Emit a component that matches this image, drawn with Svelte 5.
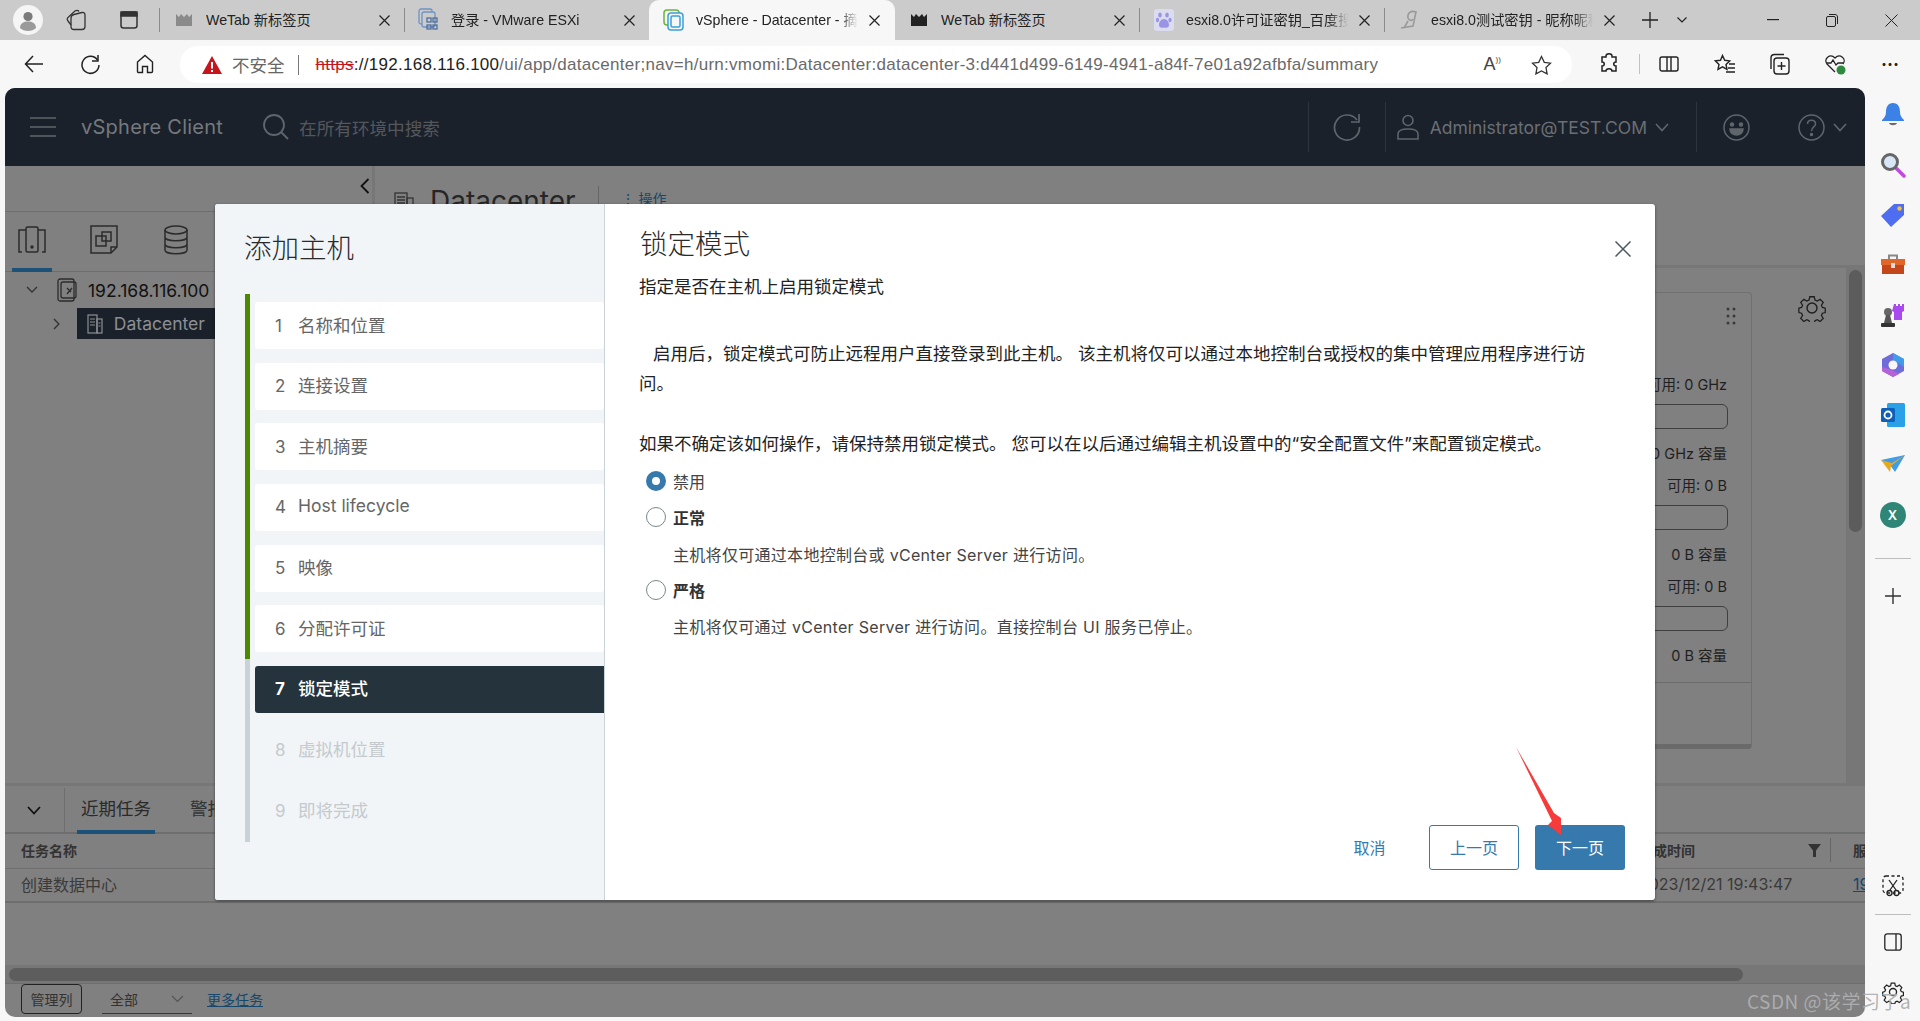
<script>
  const tabs = [
    { t: 'WeTab 新标签页', i: 'crownGrey' },
    { t: '登录 - VMware ESXi', i: 'esxi' },
    { t: 'vSphere - Datacenter - 摘要', i: 'vs', active: true },
    { t: 'WeTab 新标签页', i: 'crown' },
    { t: 'esxi8.0许可证密钥_百度搜索', i: 'paw' },
    { t: 'esxi8.0测试密钥 - 昵称昵称', i: 'swirl' }
  ];
  const steps = [
    ['1', '名称和位置', 'done'], ['2', '连接设置', 'done'], ['3', '主机摘要', 'done'],
    ['4', 'Host lifecycle', 'done'], ['5', '映像', 'done'], ['6', '分配许可证', 'done'],
    ['7', '锁定模式', 'active'], ['8', '虚拟机位置', 'off'], ['9', '即将完成', 'off']
  ];
  const usage = [
    ['可用: 0 GHz', '0 GHz 容量'], ['可用: 0 B', '0 B 容量'], ['可用: 0 B', '0 B 容量']
  ];
</script>

<div class="page">
  <div class="tabstrip">
    <div class="tabstrip-left">
      <span class="avatar"><svg width="26" height="26" viewBox="0 0 26 26"><circle cx="13" cy="9.500" r="4.600" fill="#7b7b7b"/><path d="M5 21c0-5 4-6.500 8-6.500s8 1.500 8 6.500c-2 2-5 3-8 3s-6-1-8-3z" fill="#9a9a9a"/></svg></span>
      <svg class="ti a1" width="22" height="22" viewBox="0 0 22 22" fill="none" stroke="#333" stroke-width="1.300"><path d="M8 20.500c-2 0-3-1-3-3V9c0-2 1-3 3-3.500l8-2c2-.4 3 .6 3 2.500v11.500c0 2-1 3-3 3z"/><path d="M5 16 2 12c-1-1.500-1-3 .5-4L9 2c1.500-1 3-.8 4 .5"/></svg>
      <svg class="ti a2" width="20" height="20" viewBox="0 0 20 20" fill="none" stroke="#333" stroke-width="1.500"><rect x="2" y="2" width="16" height="16" rx="2.500"/><rect x="2" y="2" width="16" height="4" fill="#333"/></svg>
    </div>
    {#each tabs as tab}
      <div class="tab" class:active={tab.active}>
        <span class="fav">
          {#if tab.i === 'crownGrey' || tab.i === 'crown'}
            <svg width="16" height="14" viewBox="0 0 16 14"><path d="M0 1l3 3 2-3 3 3 3-3 2 3 3-3v12H0z" fill={tab.i === 'crown' ? '#222' : '#8a8a8a'}/></svg>
          {:else if tab.i === 'esxi'}
            <svg width="22" height="24" viewBox="0 0 22 24" fill="none" stroke="#6d94c4" stroke-width="1.300"><rect x="1" y="1" width="13" height="15" rx="2"/><rect x="4" y="4" width="13" height="15" rx="2" fill="#cbcbcb"/><rect x="9" y="10" width="4" height="4" stroke="#4d6f9c"/><rect x="15" y="10" width="4" height="4" stroke="#4d6f9c"/><rect x="9" y="17" width="4" height="4" stroke="#4d6f9c"/><rect x="15" y="17" width="4" height="4" stroke="#4d6f9c"/></svg>
          {:else if tab.i === 'vs'}
            <svg width="22" height="22" viewBox="0 0 22 22" fill="none" stroke-width="1.500"><rect x="1" y="1" width="15" height="15" rx="3" stroke="#6cb33f"/><rect x="5" y="4" width="15" height="17" rx="3" fill="#f7f7f7" stroke="#3aa0dc"/><rect x="8" y="7" width="9" height="11" rx="1.500" stroke="#3aa0dc"/></svg>
          {:else if tab.i === 'paw'}
            <svg width="20" height="22" viewBox="0 0 20 22"><rect width="20" height="22" rx="3" fill="#dcdcf0"/><g fill="#9a94e4"><ellipse cx="6" cy="6" rx="1.800" ry="2.500"/><ellipse cx="13" cy="6" rx="1.800" ry="2.500"/><ellipse cx="3.500" cy="11" rx="1.600" ry="2.200"/><ellipse cx="16" cy="11" rx="1.600" ry="2.200"/><path d="M10 10c3 0 5 3 5 6s-3 3-5 2.500C8 19 5 19 5 16s2-6 5-6z"/></g></svg>
          {:else}
            <svg width="20" height="22" viewBox="0 0 20 22" fill="none" stroke="#9a9a9a" stroke-width="1.600"><path d="M2 19 14 17 17 3C12 1 8 4 9 9c1 3 4 3 5 1"/><path d="M9 12 5 19"/></svg>
          {/if}
        </span>
        <span class="tab-title" class:fade={tab.t.length > 14}>{tab.t}</span>
        <svg class="tab-x" width="11" height="11" viewBox="0 0 11 11" stroke="#222" stroke-width="1.200"><path d="M.5.5l10 10M10.500.5l-10 10"/></svg>
      </div>
    {/each}
    <svg class="newtab" width="16" height="16" viewBox="0 0 16 16" stroke="#222" stroke-width="1.300"><path d="M8 0v16M0 8h16"/></svg>
    <svg class="tabdrop" width="10" height="6" viewBox="0 0 10 6" fill="none" stroke="#222" stroke-width="1.200"><path d="M.5.5 5 5 9.500.5"/></svg>
    <div class="winctl">
      <svg width="12" height="2" viewBox="0 0 12 2"><rect width="12" height="1.200" fill="#222"/></svg>
      <svg width="12" height="13" viewBox="0 0 12 13" fill="none" stroke="#222"><rect x=".5" y="2.500" width="9" height="10" rx="1.500"/><path d="M3 .5h6c1.500 0 2.500 1 2.500 2.500v7"/></svg>
      <svg width="13" height="13" viewBox="0 0 13 13" stroke="#222"><path d="M.5.5l12 12M12.500.5l-12 12"/></svg>
    </div>
  </div>

  <div class="toolbar">
    <button class="tb-btn first" aria-label="后退"><svg width="20" height="18" viewBox="0 0 20 18" fill="none" stroke="#222" stroke-width="1.500"><path d="M19 9H2M9 1 1.500 9 9 17"/></svg></button>
    <button class="tb-btn" aria-label="刷新"><svg width="20" height="21" viewBox="0 0 20 21" fill="none" stroke="#222" stroke-width="1.500"><path d="M17.500 6A8.500 8.500 0 1 0 19 11"/><path d="M18 1v6h-6"/></svg></button>
    <button class="tb-btn" aria-label="主页"><svg width="20" height="20" viewBox="0 0 20 20" fill="none" stroke="#222" stroke-width="1.400"><path d="M2.500 8 10 1.500 17.500 8v9.500a1 1 0 0 1-1 1H12.500v-6h-5v6H3.500a1 1 0 0 1-1-1z"/></svg></button>
    <div class="pill">
      <svg class="warn" width="20" height="18" viewBox="0 0 20 18"><path d="M10 0 20 18H0z" fill="#c4161c"/><rect x="9" y="6" width="2" height="6.500" fill="#fff"/><rect x="9" y="14" width="2" height="2" fill="#fff"/></svg>
      <span class="insecure">不安全</span>
      <span class="pill-sep"></span>
      <span class="url"><s>https</s><b>://192.168.116.100</b>/ui/app/datacenter;nav=h/urn:vmomi:Datacenter:datacenter-3:d441d499-6149-4941-a84f-7e01a92afbfa/summary</span>
      <span class="readaloud">A<small>))</small></span>
      <svg class="star" width="21" height="20" viewBox="0 0 21 20" fill="none" stroke="#333" stroke-width="1.300"><path d="m10.500 1.500 2.800 5.800 6.200.9-4.500 4.400 1.100 6.300-5.600-3-5.600 3 1.100-6.300L1.500 8.200l6.200-.9z"/></svg>
    </div>
    <div class="tb-right">
      <svg class="r1" width="20" height="22" viewBox="0 0 20 22" fill="none" stroke="#222" stroke-width="1.500"><path d="M7 3c0-3 6-3 6 0v1h4v5c-3 0-3 4 0 4v5h-4c0-3-6-3-6 0H3v-5c3 0 3-4 0-4V4h4z"/></svg>
      <span class="r-sep"></span>
      <svg class="r2" width="20" height="20" viewBox="0 0 20 20" fill="none" stroke="#222" stroke-width="1.400"><rect x="1" y="3" width="18" height="14" rx="2"/><path d="M8 3v14M12 3v14"/></svg>
      <svg class="r3" width="22" height="21" viewBox="0 0 22 21" fill="none" stroke="#222" stroke-width="1.400"><path d="m8.500 1.500 2.200 4.800 5 .6-3.700 3.500 1 5-4.500-2.500-4.500 2.500 1-5L1.500 6.900l5-.6z"/><path d="M15 10h6M14 14h7M12 18h9"/></svg>
      <svg class="r4" width="21" height="22" viewBox="0 0 21 22" fill="none" stroke="#222" stroke-width="1.400"><rect x="5" y="5" width="15" height="16" rx="3"/><path d="M12.500 9v8M8.500 13h8M2 16V5c0-2 1-3.500 3.500-3.500H15"/></svg>
      <svg class="r5" width="24" height="24" viewBox="0 0 24 24" fill="none" stroke="#222" stroke-width="1.300"><path d="M12 20 4 12C0 7 7 1 12 6c5-5 12 1 8 6"/><path d="M4 11h4l2-3 3 5 2-2h5"/><circle cx="18" cy="18" r="4.500" fill="#2e8b3d" stroke="none"/></svg>
      <span class="more">···</span>
    </div>
  </div>

  <div class="workspace">
    <div class="app">
      <header class="app-head">
        <svg class="burger" width="26" height="20" viewBox="0 0 26 20" stroke="#5f656b" stroke-width="1.500"><path d="M0 1h26M0 10h26M0 19h26"/></svg>
        <span class="brand">vSphere Client</span>
        <svg class="search" width="28" height="28" viewBox="0 0 28 28" fill="none" stroke="#5f656b" stroke-width="1.800"><circle cx="12" cy="12" r="10"/><path d="m19 19 7 7"/></svg>
        <span class="placeholder">在所有环境中搜索</span>
        <div class="head-right">
          <span class="hd-sep"></span>
          <svg class="refresh" width="28" height="28" viewBox="0 0 28 28" fill="none" stroke="#5f656b" stroke-width="1.700"><path d="M24 7A12.500 12.500 0 1 0 26.500 14"/><path d="M26 1v8h-8"/></svg>
          <span class="hd-sep s2"></span>
          <svg class="user" width="22" height="26" viewBox="0 0 22 26" fill="none" stroke="#5f656b" stroke-width="1.600"><circle cx="11" cy="6.500" r="5"/><path d="M1 25v-5c0-3 4-5 10-5s10 2 10 5v5z"/></svg>
          <span class="admin">Administrator@TEST.COM</span>
          <svg class="hchev" width="14" height="9" viewBox="0 0 14 9" fill="none" stroke="#5f656b" stroke-width="1.600"><path d="m1 1 6 6.500L13 1"/></svg>
          <span class="hd-sep s3"></span>
          <svg class="smile" width="27" height="27" viewBox="0 0 27 27" fill="none" stroke="#5f656b" stroke-width="1.500"><circle cx="13.500" cy="13.500" r="12.500"/><circle cx="9" cy="10.500" r="1.500" fill="#5f656b"/><circle cx="18" cy="10.500" r="1.500" fill="#5f656b"/><path d="M7 15h13c0 4-3 6-6.500 6S7 19 7 15z" fill="#5f656b"/></svg>
          <svg class="help" width="27" height="27" viewBox="0 0 27 27" fill="none" stroke="#5f656b" stroke-width="1.500"><circle cx="13.500" cy="13.500" r="12.500"/><path d="M9.500 10c0-5 8-5 8 0 0 3-4 3-4 7"/><circle cx="13.500" cy="20.500" r="1" fill="#5f656b"/></svg>
          <svg class="hchev c2" width="14" height="9" viewBox="0 0 14 9" fill="none" stroke="#5f656b" stroke-width="1.600"><path d="m1 1 6 6.500L13 1"/></svg>
        </div>
      </header>

      <div class="main">
        <aside class="nav">
          <div class="nav-top">
            <svg width="10" height="16" viewBox="0 0 10 16" fill="none" stroke="#111" stroke-width="1.800"><path d="M8.500 1 1.500 8l7 7"/></svg>
          </div>
          <div class="nav-icons">
            <span class="nav-ic on"><svg width="28" height="28" viewBox="0 0 28 28" fill="none" stroke="#2b2b2b" stroke-width="1.500"><rect x="8" y="1" width="12" height="25" rx="1.500"/><path d="M8 4H1v22h3M20 4h7v22h-3"/><circle cx="14" cy="21" r="1" fill="#2b2b2b"/></svg></span>
            <span class="nav-ic"><svg width="28" height="30" viewBox="0 0 28 30" fill="none" stroke="#2b2b2b" stroke-width="1.500"><path d="M1 1h26v21l-6 6H1z"/><path d="M21 28v-6h6"/><rect x="6" y="11" width="10" height="10"/><rect x="12" y="7" width="9" height="9"/></svg></span>
            <span class="nav-ic"><svg width="26" height="30" viewBox="0 0 26 30" fill="none" stroke="#2b2b2b" stroke-width="1.500"><ellipse cx="13" cy="5" rx="11" ry="4"/><path d="M2 5v20c0 5 22 5 22 0V5M2 12c0 5 22 5 22 0M2 19c0 5 22 5 22 0"/></svg></span>
          </div>
          <div class="tree-row host">
            <svg class="tree-chev" width="12" height="8" viewBox="0 0 12 8" fill="none" stroke="#333" stroke-width="1.400"><path d="m1 1 5 5 5-5"/></svg>
            <svg class="tree-ic" width="20" height="24" viewBox="0 0 20 24" fill="none" stroke="#2b2b2b" stroke-width="1.300"><rect x="1" y="1" width="16" height="22" rx="2"/><rect x="4" y="4" width="15" height="16" rx="2"/><path d="m10 10 4 4M15 10l-5 6"/></svg>
            <span>192.168.116.100</span>
          </div>
          <div class="tree-row dc-row">
            <svg class="dc-chev" width="8" height="12" viewBox="0 0 8 12" fill="none" stroke="#333" stroke-width="1.400"><path d="m1 1 5 5-5 5"/></svg>
            <span class="dc">
              <svg width="16" height="20" viewBox="0 0 16 20" fill="none" stroke="#8d8f92" stroke-width="1.200"><rect x="1" y="1" width="9" height="18"/><rect x="10" y="5" width="5" height="14"/><path d="M3 5h5M3 8h5M3 11h5M11.500 9h2M11.500 12h2"/></svg>
              Datacenter
            </span>
          </div>
        </aside>

        <section class="content">
          <div class="title-row">
            <svg width="20" height="20" viewBox="0 0 20 20" fill="none" stroke="#333" stroke-width="1.300"><rect x="1" y="1" width="12" height="18"/><rect x="13" y="6" width="6" height="13"/><path d="M3 5h8M3 8h8M3 11h8"/></svg>
            <h2>Datacenter</h2>
            <span class="title-sep"></span>
            <span class="actions">⋮ 操作</span>
          </div>
          <div class="portlets">
            <div class="card">
              <svg class="dots" width="10" height="18" viewBox="0 0 10 18" fill="#3a3a3a"><circle cx="2" cy="2" r="1.500"/><circle cx="8" cy="2" r="1.500"/><circle cx="2" cy="9" r="1.500"/><circle cx="8" cy="9" r="1.500"/><circle cx="2" cy="16" r="1.500"/><circle cx="8" cy="16" r="1.500"/></svg>
              {#each usage as u}
                <div class="meter">
                  <div class="m-top">{u[0]}</div>
                  <div class="m-box"></div>
                  <div class="m-bot">{u[1]}</div>
                </div>
              {/each}
              <div class="card-foot"></div>
            </div>
            <div class="gear-col">
              <svg width="28" height="28" viewBox="0 0 28 28" fill="none" stroke="#1e1e1e" stroke-width="1.400"><circle cx="14" cy="14" r="5"/><path d="M11.500 1.500h5l.8 3.600 2.500 1.100 3.200-2 3.500 3.500-2 3.200 1.100 2.500 3.100.8v4.800l-3.100.8-1.100 2.500 2 3.200-3.500 3.500-3.200-2-2.500 1.100-.8 2.700h-5l-.8-2.700-2.500-1.100-3.200 2-3.500-3.500 2-3.200-1.100-2.500-3-.8v-4.800l3-.8 1.100-2.500-2-3.200 3.500-3.500 3.200 2 2.500-1.100z" transform="translate(1.400 1.400) scale(.9)"/></svg>
            </div>
            <div class="vscroll"><span></span></div>
          </div>
        </section>
      </div>

      <section class="tasks">
        <div class="tasks-tabs">
          <svg class="t-chev" width="14" height="9" viewBox="0 0 14 9" fill="none" stroke="#111" stroke-width="1.800"><path d="m1 1 6 6.500L13 1"/></svg>
          <span class="t-tab on">近期任务</span>
          <span class="t-tab">警报</span>
        </div>
        <div class="t-row t-head">
          <span class="c-name">任务名称</span>
          <span class="c-end">完成时间</span>
          <svg class="c-filter" width="13" height="13" viewBox="0 0 13 13"><path d="M0 0h13L8 6.500V13H5V6.500z" fill="#333"/></svg>
          <i class="c-div"></i>
          <span class="c-srv">服务器</span>
        </div>
        <div class="t-row t-data">
          <span class="c-name">创建数据中心</span>
          <span class="c-end">2023/12/21 19:43:47</span>
          <span class="c-filter"></span>
          <span class="c-div"></span>
          <a class="c-srv link" href="#top">192</a>
        </div>
        <div class="hscroll"><span></span></div>
        <div class="t-foot">
          <button class="manage">管理列</button>
          <span class="select">全部<svg width="13" height="8" viewBox="0 0 13 8" fill="none" stroke="#555" stroke-width="1.200"><path d="m1 1 5.500 5.500L12 1"/></svg></span>
          <a class="link more-tasks" href="#top">更多任务</a>
        </div>
      </section>
    </div>

    <aside class="edge">
      <svg width="26" height="26" viewBox="0 0 26 26"><path d="M13 1c5 0 7 4 7 9 0 4 2 6 4 8v1H2v-1c2-2 4-4 4-8 0-5 2-9 7-9z" fill="#3c82e6"/><path d="M9 21h8c-1 3-7 3-8 0z" fill="#6b6b6b"/></svg>
      <svg width="26" height="26" viewBox="0 0 26 26"><path d="m16 16 8 8" stroke="#c04ae0" stroke-width="3.500" stroke-linecap="round"/><circle cx="10" cy="10" r="7.500" fill="#d8e6f5" stroke="#666" stroke-width="3"/></svg>
      <svg width="26" height="26" viewBox="0 0 26 26"><path d="M14 2h10v11L11 25 1 14z" fill="#4f6df0"/><circle cx="19.500" cy="6.500" r="2.200" fill="#f2c230"/></svg>
      <svg width="26" height="26" viewBox="0 0 26 26"><path d="M9 7V3.500h8V7" fill="none" stroke="#888" stroke-width="2"/><path d="M1 7h24v6H1z" fill="#e2662a"/><path d="M2 13h22v9H2z" fill="#c4471c"/><rect x="11" y="11" width="4" height="5" fill="#ddd"/></svg>
      <svg width="26" height="26" viewBox="0 0 26 26"><path d="M14 3h2v2h2V3h2v2h2V3h2v7l-2 1v8h-8v-8l-2-1z" fill="#a84af0" transform="translate(0 -1)"/><circle cx="8" cy="10" r="4" fill="#666"/><path d="M6 13h4l2 8H4z" fill="#555"/><rect x="1" y="21" width="14" height="4" rx="1" fill="#333"/></svg>
      <svg width="26" height="26" viewBox="0 0 26 26"><path d="M13 1 24 7v12l-11 6L2 19V7z" fill="#6e6cd8"/><path d="M13 1 24 7v8l-6-4-5-3z" fill="#3f9ce8"/><path d="M2 15v4l11 6 6-3-7-4z" fill="#b760d8"/><circle cx="13" cy="13" r="4.500" fill="#f7f7f7"/></svg>
      <svg width="26" height="26" viewBox="0 0 26 26"><rect x="7" y="1" width="18" height="24" rx="1.500" fill="#2aa0e6"/><rect x="1" y="6" width="14" height="14" rx="1.500" fill="#0f5fb8"/><circle cx="8" cy="13" r="3.500" fill="none" stroke="#fff" stroke-width="1.800"/></svg>
      <svg width="26" height="26" viewBox="0 0 26 26"><path d="M1 8 25 3 15 20 10 13z" fill="#3f9ce8"/><path d="M1 8l11 3 13-8-14 11-1 6z" fill="#e8a820"/></svg>
      <span class="xcirc">X</span>
      <span class="edge-sep"></span>
      <svg class="plus" width="16" height="16" viewBox="0 0 16 16" stroke="#333" stroke-width="1.400"><path d="M8 0v16M0 8h16"/></svg>
      <svg class="snip" width="22" height="22" viewBox="0 0 22 22" fill="none" stroke="#222" stroke-width="1.300"><rect x="1" y="1" width="20" height="17" rx="3" stroke-dasharray="3 2.500"/><path d="m7 5 7 10M15 5 8 15"/><circle cx="7.500" cy="18" r="2.500"/><circle cx="14.500" cy="18" r="2.500"/></svg>
      <span class="edge-sep s2"></span>
      <svg class="panel" width="18" height="18" viewBox="0 0 18 18" fill="none" stroke="#222" stroke-width="1.300"><rect x=".8" y=".8" width="16.400" height="16.400" rx="2.500"/><path d="M12 1v16"/></svg>
      <svg class="egear" width="22" height="24" viewBox="0 0 28 28" fill="none" stroke="#222" stroke-width="1.700"><circle cx="14" cy="14" r="4.500"/><path d="M11.500 1.500h5l.8 3.600 2.500 1.100 3.200-2 3.500 3.500-2 3.200 1.100 2.500 3.100.8v4.800l-3.100.8-1.100 2.500 2 3.200-3.500 3.500-3.200-2-2.500 1.100-.8 2.700h-5l-.8-2.700-2.500-1.100-3.200 2-3.500-3.500 2-3.200-1.100-2.500-3-.8v-4.800l3-.8 1.100-2.500-2-3.200 3.500-3.500 3.200 2 2.500-1.100z" transform="translate(1.400 1.400) scale(.9)"/></svg>
    </aside>
  </div>

  <div class="modal" role="dialog">
    <div class="modal-left">
      <h3>添加主机</h3>
      <ol class="steps">
        {#each steps as s}
          <li class={s[2]}><span class="num">{s[0]}</span><span class="st">{s[1]}</span></li>
        {/each}
      </ol>
    </div>
    <div class="modal-right">
      <div class="m-title">
        <h3>锁定模式</h3>
        <svg width="16" height="16" viewBox="0 0 16 16" stroke="#4a5a63" stroke-width="1.500"><path d="m.5.500 15 15M15.500.500l-15 15"/></svg>
      </div>
      <p class="sub">指定是否在主机上启用锁定模式</p>
      <p class="para indent">启用后，锁定模式可防止远程用户直接登录到此主机。 该主机将仅可以通过本地控制台或授权的集中管理应用程序进行访问。</p>
      <p class="para second">如果不确定该如何操作，请保持禁用锁定模式。 您可以在以后通过编辑主机设置中的“安全配置文件”来配置锁定模式。</p>
      <div class="radio r-a"><span class="dot on"></span><span class="lbl">禁用</span></div>
      <div class="radio r-b"><span class="dot"></span><b class="lbl">正常</b></div>
      <p class="desc d-a">主机将仅可通过本地控制台或 vCenter Server 进行访问。</p>
      <div class="radio r-c"><span class="dot"></span><b class="lbl">严格</b></div>
      <p class="desc d-b">主机将仅可通过 vCenter Server 进行访问。直接控制台 UI 服务已停止。</p>
      <div class="m-foot">
        <button class="btn ghost">取消</button>
        <button class="btn outline">上一页</button>
        <button class="btn primary">下一页</button>
      </div>
    </div>
  </div>

  <svg class="arrow" width="46" height="89" viewBox="0 0 46 89"><path d="M0 0 38 66 45 71 45 88 32 78 36 74z" fill="#f73b3b"/></svg>
  <span class="watermark">CSDN @该学习了a</span>
</div>

<style>
  :global(body) { margin: 0; background: #f7f7f7; }
  :global(*) { box-sizing: border-box; }
  .page {
    position: relative; width: 1920px; height: 1021px; overflow: hidden; background: #f7f7f7;
    display: flex; flex-direction: column;
    font-family: Inter, "Noto Sans CJK SC", sans-serif; color: #222;
  }
  h2, h3, p, ol { margin: 0; padding: 0; font-weight: 400; }
  button { font: inherit; background: none; border: 0; padding: 0; }

  /* browser tab strip */
  .tabstrip { height: 40px; flex: none; background: #cbcbcb; display: flex; align-items: center; padding-left: 0; }
  .tabstrip-left { width: 159px; display: flex; align-items: center; flex: none; }
  .avatar { width: 30px; height: 30px; margin-left: 13px; border-radius: 50%; background: #f5f5f5; display: flex; align-items: center; justify-content: center; }
  .ti { flex: none; }
  .a1 { margin-left: 23px; }
  .a2 { margin-left: 31px; }
  .tab {
    width: 245px; height: 40px; flex: none; display: flex; align-items: center; padding-left: 13px; position: relative;
    font-family: "Liberation Sans", "Noto Sans CJK SC", sans-serif; font-size: 14.200px; border-left: 1px solid transparent;
  }
  .tab::before { content: ""; position: absolute; left: -1px; top: 8px; height: 24px; width: 1px; background: #8b8b8b; }
  .tab.active { background: #f7f7f7; border-radius: 10px 10px 0 0; width: 246px; margin-right: -1px; z-index: 1; }
  .tab.active::before, .tab.active + .tab::before { display: none; }
  .fav { width: 22px; height: 24px; display: flex; align-items: center; justify-content: center; flex: none; margin-right: 11px; }
  .tab-title { width: 162px; white-space: nowrap; overflow: hidden; flex: none; color: #222; padding-bottom: 2px; }
  .tab-title.fade { -webkit-mask-image: linear-gradient(90deg, #000 88%, transparent); mask-image: linear-gradient(90deg, #000 88%, transparent); }
  .tab-x { margin-left: 11px; flex: none; }
  .newtab { margin-left: 13px; flex: none; position: relative; }
  .tabdrop { margin-left: 19px; flex: none; }
  .winctl { margin-left: auto; display: flex; align-items: center; gap: 47px; padding-right: 22px; }

  /* browser toolbar */
  .toolbar { height: 48px; flex: none; display: flex; align-items: center; background: #f7f7f7; }
  .tb-btn { width: 55px; height: 30px; display: flex; align-items: center; justify-content: center; flex: none; }
  .tb-btn.first { width: 34px; margin-left: 17px; margin-right: 11px; }
  .pill {
    margin-left: 8px; width: 1392px; height: 37px; margin-top: 1px; background: #fff; border-radius: 18px; flex: none;
    display: flex; align-items: center; padding-left: 22px;
    font-family: "Liberation Sans", "Noto Sans CJK SC", sans-serif;
  }
  .warn { flex: none; }
  .insecure { font-size: 17.500px; color: #666; margin-left: 10px; }
  .pill-sep { width: 1px; height: 20px; background: #777; margin: 0 17px 0 13px; }
  .url { font-size: 17px; color: #6a6a6a; white-space: nowrap; letter-spacing: .28px; width: 1120px; flex: none; }
  .url s { color: #c4161c; }
  .url b { font-weight: 400; color: #222; }
  .readaloud { font-size: 18px; color: #444; margin-left: 48px; }
  .readaloud small { font-size: 8px; vertical-align: 8px; }
  .star { margin-left: 30px; }
  .tb-right { display: flex; align-items: center; flex: none; width: 344px; position: relative; }
  .r1 { margin-left: 27px; }
  .r-sep { width: 1px; height: 20px; background: #c2c2c2; margin-left: 20px; }
  .r2 { margin-left: 19px; }
  .r3 { margin-left: 35px; }
  .r4 { margin-left: 33px; }
  .r5 { margin-left: 33px; }
  .more { margin-left: 34px; font-size: 18px; font-weight: 700; letter-spacing: 0; color: #222; }

  /* workspace */
  .workspace { flex: 1; min-height: 0; display: flex; }
  .app {
    width: 1860px; margin: 0 0 4px 5px; background: #808080; border-radius: 10px; overflow: hidden;
    display: flex; flex-direction: column; color: #222; flex: none;
  }
  .app-head { height: 78px; flex: none; background: #1a212b; display: flex; align-items: center; color: #6a6f74; }
  .burger { margin-left: 25px; flex: none; }
  .brand { margin-left: 25px; font-size: 20px; color: #75797d; letter-spacing: .25px; }
  .search { margin-left: 39px; flex: none; }
  .placeholder { margin-left: 9px; font-size: 17.600px; color: #54585d; }
  .head-right { margin-left: auto; display: flex; align-items: center; height: 50px; padding-right: 18px; }
  .hd-sep { width: 1px; height: 50px; background: #2d343d; flex: none; }
  .refresh { margin: 0 24px 0 24px; }
  .user { margin-left: 11px; }
  .admin { margin-left: 11px; font-size: 17.500px; color: #6a6f74; white-space: nowrap; }
  .hchev { margin-left: 8px; }
  .s3 { margin-left: 27px; }
  .smile { margin-left: 26px; }
  .help { margin-left: 48px; }
  .c2 { margin-left: 8px; }

  .main { height: 617px; flex: none; display: flex; }
  .nav { width: 370px; flex: none; border-right: 3px solid #777; }
  .nav-top { height: 46px; border-bottom: 1px solid #6e6e6e; display: flex; align-items: center; justify-content: flex-end; padding: 0 2px 5px 0; }
  .nav-icons { height: 60px; display: flex; border-bottom: 1px solid #6e6e6e; padding-left: 7px; }
  .nav-ic { width: 40px; margin-right: 32px; height: 60px; display: flex; justify-content: center; align-items: center; border-bottom: 4px solid transparent; margin-bottom: -1px; }
  .nav-ic.on { border-bottom-color: #1c5278; }
  .tree-row { display: flex; align-items: center; height: 36px; font-size: 17.500px; color: #111; }
  .tree-chev { margin-left: 21px; }
  .tree-ic { margin-left: 19px; }
  .host span { margin-left: 11px; }
  .dc-row { height: 31px; }
  .dc-chev { margin-left: 48px; }
  .dc { margin-left: 16px; width: 300px; height: 31px; background: #1a212b; color: #8d8f92; display: flex; align-items: center; padding-left: 10px; gap: 11px; font-size: 17.500px; }

  .content { flex: 1; min-width: 0; display: flex; flex-direction: column; }
  .title-row { height: 102px; display: flex; align-items: flex-start; padding: 0 0 0 19px; flex: none; border-bottom: 3px solid #777; }
  .title-row svg { margin-top: 26px; flex: none; }
  .title-row h2 { font-size: 28px; line-height: 36px; margin: 17px 0 0 16px; color: #262626; }
  .title-sep { width: 1px; height: 28px; background: #666; margin: 20px 0 0 22px; }
  .actions { font-size: 14px; line-height: 20px; margin: 23px 0 0 22px; color: #17476b; }
  .portlets { flex: 1; display: flex; justify-content: flex-end; min-height: 0; }
  .card { width: 300px; height: 457px; margin-top: 24px; border: 1px solid #707070; border-bottom: 5px solid #6a6a6a; border-radius: 4px; position: relative; padding-top: 82px; }
  .dots { position: absolute; right: 15px; top: 14px; }
  .meter { padding-right: 23px; text-align: right; font-size: 14.500px; height: 101px; color: #1f1f1f; }
  .m-top { line-height: 20px; padding-right: 1px; }
  .m-box { height: 25px; margin-top: 9px; border: 1px solid #3f3f3f; border-radius: 6px; margin-right: 0; }
  .m-bot { line-height: 20px; margin-top: 15px; padding-right: 1px; }
  .card-foot { position: absolute; left: 0; right: 0; top: 389px; border-top: 1px solid #6c6c6c; }
  .gear-col { width: 94px; padding: 26px 0 0 46px; flex: none; }
  .vscroll { width: 19px; flex: none; background: #777; padding: 2px 3px 0; }
  .vscroll span { display: block; width: 13px; height: 262px; background: #5c5c5c; border-radius: 7px; }

  .tasks { flex: 1; display: flex; flex-direction: column; min-height: 0; border-top: 3px solid #777; }
  .tasks-tabs { height: 48px; flex: none; display: flex; align-items: flex-end; border-bottom: 2px solid #6e6e6e; position: relative; }
  .t-chev { position: absolute; left: 22px; top: 20px; }
  .tasks-tabs::before { content: ""; position: absolute; left: 59px; top: 2px; bottom: 0; width: 1px; background: #6e6e6e; }
  .t-tab { height: 44px; margin-bottom: -2px; font-size: 17.500px; line-height: 38px; color: #333; padding: 0 4px; border-bottom: 4px solid transparent; }
  .t-tab.on { margin-left: 72px; border-bottom-color: #1c5278; margin-right: 31px; color: #2a2a2a; }
  .t-row { display: flex; align-items: center; border-bottom: 1px solid #6e6e6e; padding-left: 16px; flex: none; }
  .t-head { height: 35px; font-size: 14px; font-weight: 700; color: #333; padding-bottom: 2px; }
  .t-data { height: 34px; font-size: 16px; color: #3a3a3a; border-bottom: 2px solid #6e6e6e; padding-bottom: 2px; }
  .c-name { width: 1618px; flex: none; }
  .c-end { width: 164px; flex: none; white-space: nowrap; }
  .c-filter { width: 13px; flex: none; margin-left: 5px; }
  .c-div { width: 1px; height: 24px; flex: none; background: #666; margin-left: 9px; }
  .t-data .c-div { background: none; }
  .c-srv { margin-left: 22px; white-space: nowrap; width: 30px; overflow: hidden; flex: none; }
  .link { color: #17476b; text-decoration: underline; }
  .hscroll { margin-top: 62px; height: 19px; background: #777; padding: 3px 4px; flex: none; border-bottom: 1px solid #6e6e6e; }
  .hscroll span { display: block; height: 13px; width: 1734px; background: #5d5d5d; border-radius: 7px; }
  .t-foot { flex: 1; display: flex; align-items: center; padding: 0 0 3px 16px; font-size: 14px; }
  .manage { width: 61px; height: 30px; border: 1px solid #222; border-radius: 4px; color: #333; }
  .select { margin-left: 20px; width: 90px; height: 30px; border-bottom: 1px solid #2b3a44; padding-left: 8px; display: flex; align-items: center; justify-content: space-between; padding-right: 8px; color: #333; }
  .more-tasks { margin-left: 15px; }

  /* extension edge */
  .edge { flex: 1; display: flex; flex-direction: column; align-items: center; padding-top: 14px; }
  .edge > svg { flex: none; margin-bottom: 24px; }
  .xcirc { width: 26px; height: 26px; border-radius: 50%; background: #2f8576; color: #fff; font-size: 13px; font-weight: 600; display: flex; align-items: center; justify-content: center; flex: none; }
  .edge-sep { width: 36px; height: 1px; background: #bdbdbd; margin-top: 30px; flex: none; }
  .edge .plus { margin-top: 29px; margin-bottom: 0; }
  .edge .snip { margin-top: 271px; margin-bottom: 0; }
  .edge-sep.s2 { margin-top: 17px; }
  .edge .panel { margin-top: 18px; margin-bottom: 0; }
  .edge .egear { margin-top: 29px; margin-bottom: 0; }

  /* modal */
  .modal {
    position: absolute; left: 215px; top: 204px; width: 1440px; height: 696px; background: #fff; border-radius: 3px;
    display: flex; overflow: hidden; box-shadow: 0 1px 3px rgba(0,0,0,.5);
  }
  .modal-left { width: 390px; flex: none; background: #f1f5f8; border-right: 1px solid #ccd3d8; padding-left: 30px; }
  .modal-left h3 { font-size: 27.500px; line-height: 40px; margin-top: 24px; margin-left: -1px; color: #2a2a2a; font-weight: 300; }
  .steps { list-style: none; margin-top: 26px; padding: 8px 0 0 5px; height: 548px; border-left: 5px solid #c9d2d6; position: relative; display: flex; flex-direction: column; gap: 13.670px; }
  .steps::before { content: ""; position: absolute; left: -5px; top: 0; width: 5px; height: 365px; background: #4e8700; }
  .steps li { height: 47px; flex: none; border-radius: 3px; display: flex; align-items: center; font-size: 17.500px; color: #666; background: #fff; padding-left: 20px; }
  .steps .num { width: 23px; font-size: 17px; flex: none; }
  .steps .st { padding-bottom: 3px; }
  .steps li.off { background: transparent; color: #c4cacd; }
  .steps li.active { background: #25333d; color: #fff; font-weight: 500; border-radius: 3px 0 0 3px; }
  .steps li.active .num { font-weight: 700; }
  .modal-right { flex: 1; min-width: 0; display: flex; flex-direction: column; padding-left: 34px; }
  .m-title { display: flex; justify-content: space-between; align-items: flex-start; padding-right: 24px; margin-top: 20px; height: 40px; flex: none; }
  .m-title h3 { font-size: 27.500px; line-height: 40px; color: #2a2a2a; font-weight: 300; margin-left: 1px; }
  .m-title svg { margin-top: 17px; }
  .sub, .para { font-size: 17.500px; line-height: 30px; color: #222; }
  .sub { margin-top: 8px; }
  .para { width: 950px; }
  .indent { margin-top: 37px; text-indent: 14px; }
  .second { margin-top: 30px; width: 1000px; }
  .radio { display: flex; align-items: center; height: 34px; flex: none; padding-left: 7px; }
  .r-a { margin-top: 5px; }
  .r-b { margin-top: 2px; }
  .r-c { margin-top: 3px; }
  .dot { width: 20px; height: 20px; border-radius: 50%; border: 1.500px solid #7a868d; background: #fff; flex: none; }
  .dot.on { border: 6.500px solid #3579ad; }
  .lbl { margin-left: 7px; font-size: 16px; color: #444; }
  b.lbl { font-weight: 700; color: #333; padding-bottom: 1px; }
  .desc { font-size: 16px; letter-spacing: .3px; line-height: 30px; color: #444; padding-left: 34px; }
  .d-a { margin-top: 6px; }
  .d-b { margin-top: 5px; }
  .m-foot { margin-top: auto; padding: 0 30px 30px 0; display: flex; justify-content: flex-end; align-items: center; }
  .btn { height: 45px; width: 90px; border-radius: 3px; font-size: 16px; padding-bottom: 2px; }
  .ghost { color: #3579ad; margin-right: 29px; width: 61px; }
  .outline { border: 1px solid #3579ad; color: #3579ad; margin-right: 16px; }
  .primary { background: #3579ad; color: #fff; }

  .arrow { position: absolute; left: 1516px; top: 747px; }
  .watermark {
    position: absolute; left: 1747px; top: 988px; font-size: 19px; line-height: 26px; color: rgba(175,175,175,.95);
    font-family: "Noto Sans CJK SC", sans-serif; white-space: nowrap; letter-spacing: .5px;
  }
</style>
